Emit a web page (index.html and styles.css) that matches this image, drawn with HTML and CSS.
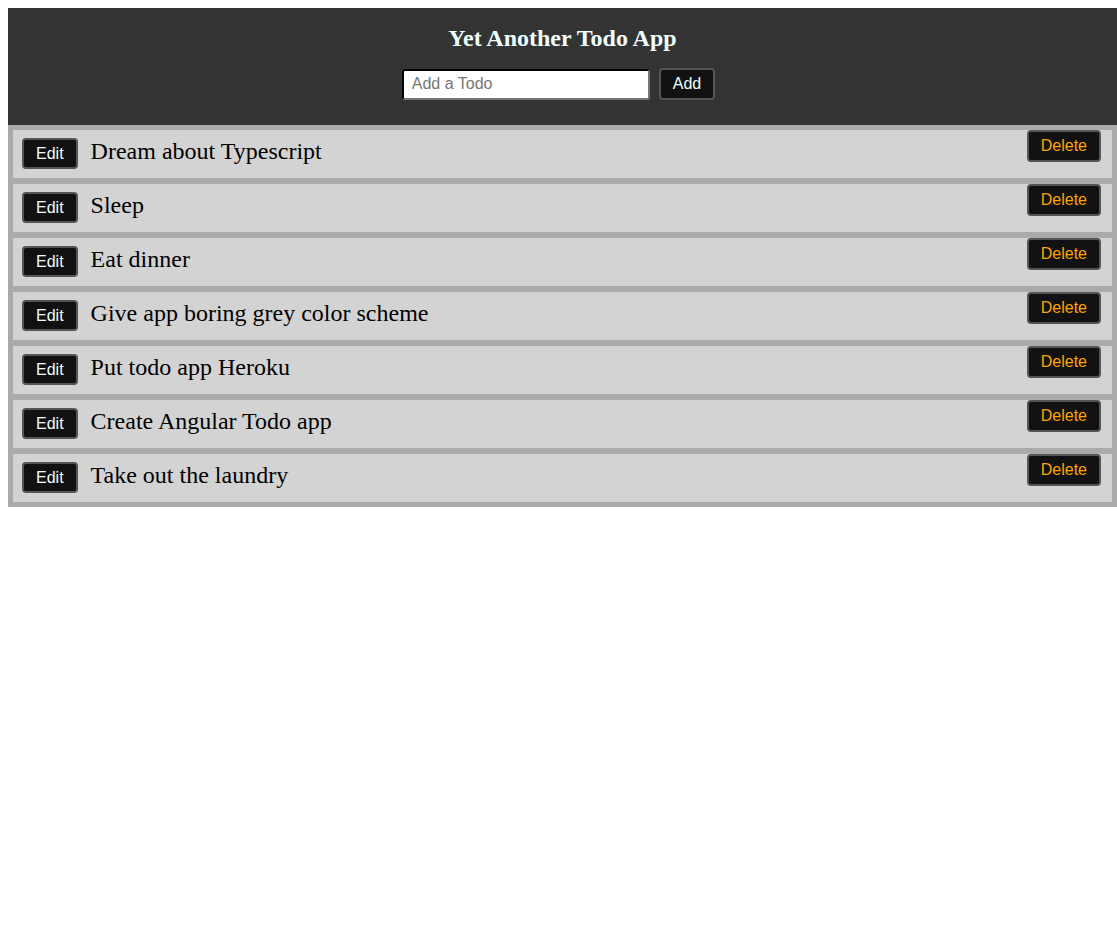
FILE: index.html
```html
<!DOCTYPE html>
<html>
<head>
<meta charset="utf-8">
<title>Yet Another Todo App</title>
<link rel="stylesheet" href="styles.css">
</head>
<body>
<header class="header">
  <h2 class="title">Yet Another Todo App</h2>
  <form class="add-form">
    <input class="add-input" type="text" placeholder="Add a Todo">
    <button class="btn" type="button">Add</button>
  </form>
</header>
<ul class="list">
  <li class="item"><button class="btn btn-edit">Edit</button><span class="text">Dream about Typescript</span><button class="btn btn-delete">Delete</button></li>
  <li class="item"><button class="btn btn-edit">Edit</button><span class="text">Sleep</span><button class="btn btn-delete">Delete</button></li>
  <li class="item"><button class="btn btn-edit">Edit</button><span class="text">Eat dinner</span><button class="btn btn-delete">Delete</button></li>
  <li class="item"><button class="btn btn-edit">Edit</button><span class="text">Give app boring grey color scheme</span><button class="btn btn-delete">Delete</button></li>
  <li class="item"><button class="btn btn-edit">Edit</button><span class="text">Put todo app Heroku</span><button class="btn btn-delete">Delete</button></li>
  <li class="item"><button class="btn btn-edit">Edit</button><span class="text">Create Angular Todo app</span><button class="btn btn-delete">Delete</button></li>
  <li class="item"><button class="btn btn-edit">Edit</button><span class="text">Take out the laundry</span><button class="btn btn-delete">Delete</button></li>
</ul>
</body>
</html>
```

FILE: styles.css
```css
html, body {
  overflow-x: hidden;
}
body {
  margin: 8px 0 8px 8px;
  font-family: "Liberation Serif", "Times New Roman", serif;
  background: #fff;
}
.header {
  background: #333333;
  height: 117px;
  box-sizing: border-box;
  padding-top: 17px;
  display: flex;
  flex-direction: column;
  align-items: center;
}
.title {
  margin: 0;
  font-size: 24px;
  font-weight: bold;
  line-height: 27px;
  color: #f0ffff;
}
.add-form {
  margin: 16px 8px 0 0;
  display: flex;
  align-items: center;
  gap: 9px;
}
.add-input {
  width: 248px;
  height: 31px;
  box-sizing: border-box;
  border: 2px inset #767676;
  border-top-color: #1e1e1e;
  border-left-color: #1e1e1e;
  border-radius: 3px;
  background: #fff;
  padding: 0 8px;
  font-family: "Liberation Sans", Arial, sans-serif;
  font-size: 16px;
  color: #000;
  outline: none;
}
.add-input::placeholder {
  color: #767676;
}
.btn {
  height: 32px;
  box-sizing: border-box;
  padding: 0 12px;
  background: #111111;
  border: 2px solid #555555;
  border-radius: 4px;
  font-family: "Liberation Sans", Arial, sans-serif;
  font-size: 16px;
  color: #f0ffff;
  cursor: pointer;
}
.list {
  list-style: none;
  margin: 0;
  padding: 5px;
  background: #aaaaaa;
  display: flex;
  flex-direction: column;
  gap: 6px;
}
.item {
  height: 48px;
  background: #d3d3d3;
  display: flex;
  align-items: flex-start;
}
.btn-edit {
  margin: 8px 13px 0 9px;
  height: 31px;
}
.text {
  margin-top: 7px;
  font-size: 24px;
  line-height: 28px;
  color: #000;
}
.btn-delete {
  margin: 0 11px 0 auto;
  color: #ffa500;
}
```
